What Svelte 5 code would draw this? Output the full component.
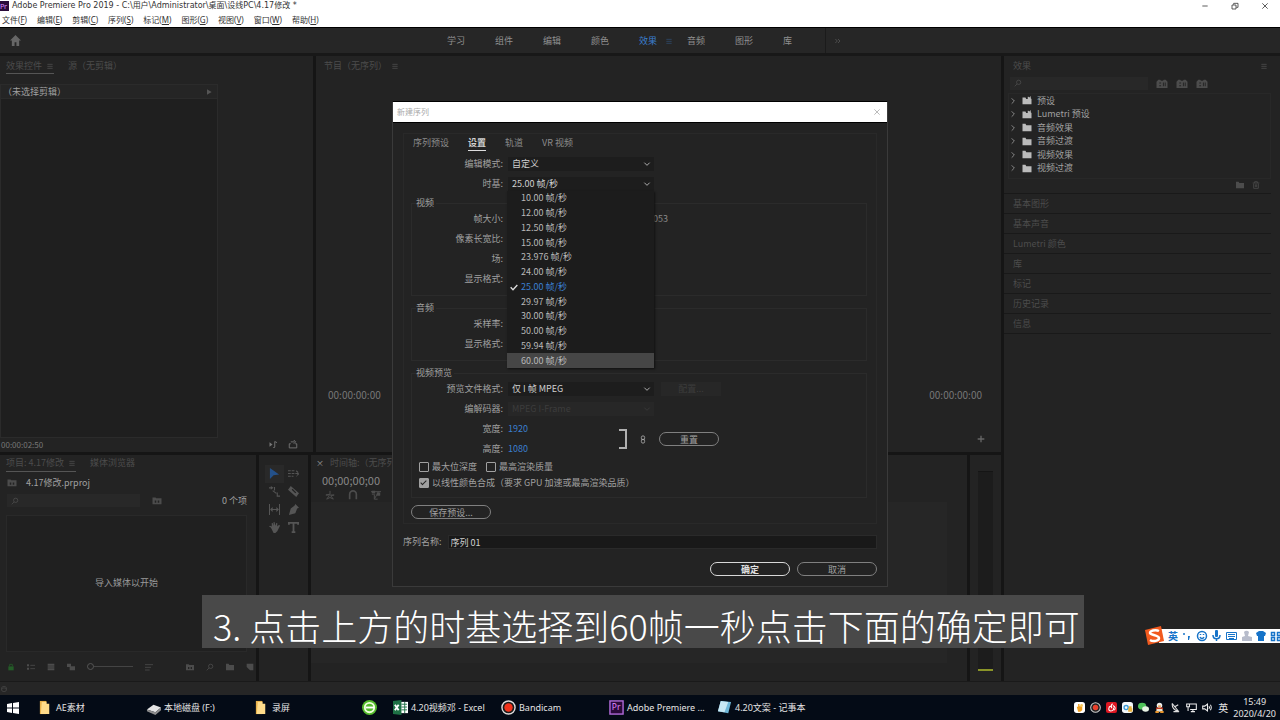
<script>
  // Application menus and workspaces
  const menus = ['文件(F)', '编辑(E)', '剪辑(C)', '序列(S)', '标记(M)', '图形(G)', '视图(V)', '窗口(W)', '帮助(H)'];
  const workspaces = ['学习', '组件', '编辑', '颜色', '效果', '音频', '图形', '库'];
  let workspace = $state('效果');

  // Effects panel
  const effects = [
    { name: '预设', preset: true },
    { name: 'Lumetri 预设', preset: true },
    { name: '音频效果' },
    { name: '音频过渡' },
    { name: '视频效果' },
    { name: '视频过渡' }
  ];
  const closedPanels = ['基本图形', '基本声音', 'Lumetri 颜色', '库', '标记', '历史记录', '信息'];

  // New sequence dialog
  const tabs = ['序列预设', '设置', '轨道', 'VR 视频'];
  const rates = ['10.00', '12.00', '12.50', '15.00', '23.976', '24.00', '25.00', '29.97', '30.00', '50.00', '59.94', '60.00'];
  let tab = $state('设置');
  let rate = $state('25.00');
  let hovered = $state('60.00');
  let sequenceName = $state('序列 01');

  const tools = ['select', 'track', 'ripple', 'razor', 'slip', 'pen', 'hand', 'type'];
  const toolNames = ['选择', '向前选择轨道', '波纹编辑', '剃刀', '外滑', '钢笔', '手形', '文字'];

  const tasks = [
    { icon: 'folder', text: 'AE素材' },
    { icon: 'disk', text: '本地磁盘 (F:)' },
    { icon: 'folder', text: '录屏' },
    { icon: 'browser', text: '' },
    { icon: 'excel', text: '4.20视频邓 - Excel' },
    { icon: 'bandicam', text: 'Bandicam' },
    { icon: 'pr', text: 'Adobe Premiere ...' },
    { icon: 'note', text: '4.20文案 - 记事本' }
  ];
  const tray = ['hand', 'record', 'music', 'cloud', 'wechat', 'qq', 'dish', 'net', 'sound'];
</script>

{#snippet glyph(name)}
  <svg class="glyph" viewBox="0 0 12 12" aria-hidden="true">
    {#if name === 'home'}
      <path class="fill" d="M6 0 0 6h2v6h3V8h2v4h3V6h2z" />
    {:else if name === 'menu'}
      <path d="M2 3.5h8M2 6.5h8M2 9.5h8" />
    {:else if name === 'more'}
      <path d="M2 3l3 3-3 3M6 3l3 3-3 3" />
    {:else if name === 'search'}
      <circle cx="7" cy="5" r="3.2" /><path d="M4.6 7.4 1 11" />
    {:else if name === 'right'}
      <path d="M4 2l4 4-4 4" />
    {:else if name === 'down'}
      <path d="M2 4l4 4 4-4" />
    {:else if name === 'play'}
      <path class="fill" d="M3 2l7 4-7 4z" />
    {:else if name === 'close'}
      <path d="M2 2l8 8M10 2l-8 8" />
    {:else if name === 'min'}
      <path d="M2 6h8" />
    {:else if name === 'restore'}
      <path d="M1.5 4.5h6v6h-6zM4 4V2h6.500v6H8" />
    {:else if name === 'folder'}
      <path class="fill" d="M0 1h4l1 2h7v8H0z" />
    {:else if name === 'preset'}
      <path class="fill" d="M0 2h4l1 2h2V1h1l1 1 2-2v3l1 1v7H0z" />
    {:else if name === 'bin'}
      <path class="fill" fill-rule="evenodd" d="M0 2h4l1 1h7v8H0zM3 6v3h2V6zM7 6v3h2V6z" />
    {:else if name === 'badge'}
      <path class="fill" fill-rule="evenodd" d="M0 4l2-2h2l1 1h2l1-1h2l2 2v7H0zM3 5v1h2V5zM3 8v1h2V8zM7 5v4h1V5zM9 5v4h1V5z" />
    {:else if name === 'trash'}
      <path d="M1 3h10M4 3V1h4v2M2.500 4v7h7V4M5 5v4M7 5v4" />
    {:else if name === 'note'}
      <path class="fill" d="M0 3l4 3-4 3z" /><path d="M7 9.500V2l3 1.500M5 10h2" />
    {:else if name === 'export'}
      <path d="M3 5H1v5.500h10V5H9M3 2.500h5M7 0l2.500 2.500L7 5" />
    {:else if name === 'plus'}
      <path class="thick" d="M6 1v10M1 6h10" />
    {:else if name === 'pencil'}
      <path class="fill" d="M2 5h8v6H2z" /><path d="M4 5V2h4v3" />
    {:else if name === 'list'}
      <path class="fill" d="M0 2h3v3H0zM0 7h3v3H0z" /><path d="M5 3.500h7M5 8.500h7" />
    {:else if name === 'icons'}
      <path class="fill" d="M1 1h10v3H1zM1 5h10v2H1zM1 8h10v3H1z" />
    {:else if name === 'free'}
      <path class="fill" d="M0 1h6v5H0zM4 5h8v6H4z" />
    {:else if name === 'sort'}
      <path d="M0 2.500h12M0 6.500h9M0 10.500h7" />
    {:else if name === 'new'}
      <path class="fill" d="M1 1h10v10H6L1 6z" />
    {:else if name === 'link'}
      <rect x="3.500" y="0.500" width="5" height="6" rx="2.500" /><rect x="3.500" y="5.500" width="5" height="6" rx="2.500" />
    {:else if name === 'check'}
      <path class="thick" d="M1 6.500 4.500 10 11 3" />
    {:else if name === 'select'}
      <path class="fill" d="M1 0l10 7-6 1-4 4z" />
    {:else if name === 'track'}
      <path d="M0 3h7M0 6h12M9 3l3 3-3 3M0 9h6" stroke-dasharray="3 1" />
    {:else if name === 'ripple'}
      <path d="M0 2h3M6 1v4M4 5l4 3M9 7v4h3" /><path class="fill" d="M2 0l3 2-3 2z" />
    {:else if name === 'razor'}
      <path class="fill" fill-rule="evenodd" d="M3 0l9 8-3 4-9-8zM4 4l4 4 1-1-4-4z" />
    {:else if name === 'slip'}
      <path d="M.5 0v12M11.500 0v12M2 6h8M4 4 2 6l2 2M8 4l2 2-2 2" />
    {:else if name === 'pen'}
      <path class="fill" d="M8 0l4 4-2 1-2 5-7 2 2-7 4-3z" />
    {:else if name === 'hand'}
      <path class="fill" d="M2 6 0 5l1-1 2 1V1h1l1 3V0h1l1 4 1-3h1v4l2-2 1 1-3 6-2 2H5z" />
    {:else if name === 'type'}
      <path class="thick" d="M1 3V1h10v2M6 1v10M4 11h4" />
    {:else if name === 'nest'}
      <path d="M6 1v4L1 6h10L7 7l3 4-4-2-4 2 3-4" />
    {:else if name === 'magnet'}
      <path class="thick" d="M2 11V5a4 4 0 0 1 8 0v6" />
    {:else if name === 'linked'}
      <path d="M0 2h12M1 5h4M7 5h4M9 2 4 11M4 6v5h4" /><path class="fill" d="M1 1h4v3H1zM7 3h4v4H7z" />
    {:else if name === 'sync'}
      <circle cx="6" cy="6" r="4" /><path d="M3 6l3-2 3 2" />
    {/if}
  </svg>
{/snippet}

{#snippet appIcon(name)}
  <svg class="app-icon" viewBox="0 0 16 16" aria-hidden="true">
    {#if name === 'folder'}
      <path fill="#e9b34c" d="M2 1h7v14H2z" /><path fill="#ffdc8a" d="M4 2h5v2h3v11H3z" />
    {:else if name === 'disk'}
      <path fill="#e4e4e4" d="M1 10l7-5 8 3-6 5z" /><path fill="#8c8c8c" d="M1 10l9 3 6-5v3l-6 5-9-4z" />
    {:else if name === 'browser'}
      <circle cx="8" cy="8" r="8" fill="#55bb2c" /><circle cx="8" cy="8" r="5" fill="none" stroke="#efffdc" stroke-width="2" />
      <path stroke="#fff" stroke-width="2" d="M4 8h9" />
    {:else if name === 'excel'}
      <path fill="#fff" d="M8 2h8v12H8z" /><path fill="#1e7145" d="M0 1l9-1v16l-9-1z" />
      <path stroke="#1e7145" fill="none" d="M9 4.500h6M9 7.500h6M9 10.500h6M12.500 2v12" />
      <path stroke="#fff" stroke-width="2" d="M2 5l4 6M6 5l-4 6" />
    {:else if name === 'bandicam'}
      <circle cx="8" cy="8" r="7" fill="#1b1b1b" stroke="#ddd" stroke-width="1.500" /><circle cx="8" cy="8" r="4.500" fill="#f2331b" />
    {:else if name === 'pr'}
      <rect x="1" y="1" width="14" height="14" fill="#2a0a3a" stroke="#b06ad8" stroke-width="1.500" />
      <text x="3" y="11" font-size="9" fill="#e08cff">Pr</text>
    {:else if name === 'note'}
      <path fill="#6fb7d8" d="M4 1l11 1-3 12-11-2z" /><path fill="#c8e8f4" d="M4 1l8 1-4 11-7-1z" />
    {:else if name === 'hand'}
      <rect width="16" height="16" rx="4" fill="#fff" /><path fill="#f0a020" d="M4 7h2V3h2v3h4v6l-3 2H6z" /><circle cx="11" cy="5" r="2" fill="#f9c958" />
    {:else if name === 'record'}
      <circle cx="8" cy="8" r="7" fill="#222" stroke="#ccc" stroke-width="1.500" /><circle cx="8" cy="8" r="4" fill="#e8402c" />
    {:else if name === 'music'}
      <rect width="16" height="16" rx="3" fill="#dd1722" /><path fill="none" stroke="#fff" stroke-width="1.500" d="M10 3c-3 0-2 3-2 6M7 6c-4 1-4 7 0 7s5-3 3-5M10 5c4 2 4 5 2 7" />
    {:else if name === 'cloud'}
      <rect width="16" height="16" rx="4" fill="#f4f8fa" /><circle cx="6" cy="8" r="3" fill="none" stroke="#3b9bd8" stroke-width="2" /><path fill="#e8b13a" d="M10 6h4v3h1v5H9V9h1z" />
    {:else if name === 'wechat'}
      <ellipse cx="6" cy="6" rx="6" ry="5" fill="#4fc35a" /><ellipse cx="11" cy="10" rx="5" ry="4" fill="#e8f3e4" />
    {:else if name === 'qq'}
      <circle cx="8" cy="5" r="4" fill="#eee" /><path fill="#c43b20" d="M3 8h10v3H3z" /><path fill="#e9e2d0" d="M4 10h8l1 4H3z" /><path fill="#e8952c" d="M2 13h5v3H2zM9 13h5v3H9zM6 5h4v2H6z" />
    {:else if name === 'dish'}
      <path fill="none" stroke="#ddd" stroke-width="1.500" d="M3 2c0 6 3 10 9 11L3 2M5 14h8M7 7l5-3" />
    {:else if name === 'net'}
      <path fill="none" stroke="#eee" stroke-width="1.500" d="M4 3h11v8H6M10 11v3M7 14h6M1 3h4v4H1zM3 7v6" />
    {:else if name === 'sound'}
      <path fill="none" stroke="#eee" stroke-width="1.500" d="M1 6h3l4-3v10l-4-3H1zM10 6c1 1 1 3 0 4M12 4c2 2 2 6 0 8" />
    {/if}
  </svg>
{/snippet}

<div class="app">
  <!-- Window title and menus -->
  <header class="titlebar">
    <svg class="logo" viewBox="0 0 9 10" aria-hidden="true"><rect width="9" height="10" fill="#2a0a3a" /><text x="0" y="8" font-size="7" fill="#d98cff">Pr</text></svg>
    <h1>Adobe Premiere Pro 2019 - C:\用户\Administrator\桌面\设线PC\4.17修改 *</h1>
    <div class="window-buttons">
      <button aria-label="最小化">{@render glyph('min')}</button>
      <button aria-label="还原">{@render glyph('restore')}</button>
      <button aria-label="关闭">{@render glyph('close')}</button>
    </div>
  </header>
  <nav class="menubar">
    {#each menus as item}
      <button>{item.slice(0, 3)}<u>{item[3]}</u>)</button>
    {/each}
  </nav>

  <!-- Workspace switcher -->
  <nav class="workspaces">
    <button class="home" aria-label="主页">{@render glyph('home')}</button>
    <div class="workspace-list">
      {#each workspaces as item}
        <button class:active={workspace === item} onclick={() => (workspace = item)}>
          {item}{#if workspace === item}{@render glyph('menu')}{/if}
        </button>
      {/each}
    </div>
    <button class="overflow" aria-label="更多">{@render glyph('more')}</button>
  </nav>

  <main>
    <div class="panels">
      <div class="top-row">
        <section class="panel controls">
          <div class="panel-tabs">
            <span class="current">效果控件 {@render glyph('menu')}</span>
            <span>源（无剪辑）</span>
          </div>
          <div class="clip">
            <div class="clip-head"><span>（未选择剪辑）</span>{@render glyph('play')}</div>
          </div>
          <footer><span>00:00:02:50</span><i></i>{@render glyph('note')}{@render glyph('export')}</footer>
        </section>

        <section class="panel program">
          <div class="panel-tabs"><span>节目（无序列） {@render glyph('menu')}</span></div>
          <div class="monitor"></div>
          <div class="timecodes"><span>00:00:00:00</span><span>00:00:00:00</span></div>
          <div class="transport"><button aria-label="按钮编辑器">{@render glyph('plus')}</button></div>
        </section>
      </div>

      <div class="bottom-row">
        <section class="panel project">
          <div class="panel-tabs">
            <span class="current">项目: 4.17修改 {@render glyph('menu')}</span>
            <span>媒体浏览器</span>
          </div>
          <div class="path">{@render glyph('bin')}<span>4.17修改.prproj</span></div>
          <div class="find">
            <label class="search">{@render glyph('search')}<input aria-label="搜索项目" /></label>
            {@render glyph('bin')}
            <span>0 个项</span>
          </div>
          <div class="drop">导入媒体以开始</div>
          <div class="project-tools">
            <span class="green">{@render glyph('pencil')}</span>
            {@render glyph('list')}{@render glyph('icons')}{@render glyph('free')}
            <input type="range" min="0" max="100" value="0" aria-label="缩放" />
            {@render glyph('sort')}
            <i></i>
            {@render glyph('bin')}{@render glyph('search')}{@render glyph('folder')}{@render glyph('new')}
          </div>
        </section>

        <section class="panel tools">
          {#each tools as tool, i}
            <button class:active={tool === 'select'} aria-label={toolNames[i]}>{@render glyph(tool)}</button>
          {/each}
        </section>

        <section class="panel timeline">
          <div class="panel-tabs"><span class="x">×</span><span>时间轴:（无序列）</span></div>
          <div class="position">00;00;00;00</div>
          <div class="toggles">{@render glyph('nest')}{@render glyph('magnet')}{@render glyph('linked')}</div>
          <div class="tracks">在此处放下媒体以创建序列。</div>
        </section>

        <section class="panel meters"><div class="meter"></div></section>
      </div>
    </div>

    <!-- Effects browser -->
    <aside class="panel effects">
      <div class="panel-tabs"><span>效果</span>{@render glyph('menu')}</div>
      <div class="effects-find">
        <label class="search">{@render glyph('search')}<input aria-label="搜索效果" /></label>
        {@render glyph('badge')}{@render glyph('badge')}{@render glyph('badge')}
      </div>
      <ul class="tree">
        {#each effects as item}
          <li>{@render glyph('right')}{@render glyph(item.preset ? 'preset' : 'folder')}<span>{item.name}</span></li>
        {/each}
      </ul>
      <div class="effects-tools">{@render glyph('folder')}{@render glyph('trash')}</div>
      {#each closedPanels as name}
        <button class="closed">{name}</button>
      {/each}
    </aside>
  </main>

  <div class="status">{@render glyph('sync')}</div>

  <!-- Windows taskbar -->
  <footer class="taskbar">
    <button class="start" aria-label="开始">
      <svg viewBox="0 0 12 12"><path fill="#fff" d="M0 2l5-1v4.500H0zM6 1l6-1v5.500H6zM0 6.500h5V11l-5-1zM6 6.500h6V12l-6-1z" /></svg>
    </button>
    {#each tasks as task}
      <button class="task" class:small={!task.text} aria-label={task.text || '浏览器'}>{@render appIcon(task.icon)}{task.text}</button>
    {/each}
    <div class="tray">
      {#each tray as item}{@render appIcon(item)}{/each}
      <span class="lang">英</span>
      <time><span>15:49</span><span>2020/4/20</span></time>
    </div>
  </footer>

  <!-- New sequence dialog -->
  <div class="dialog" role="dialog" aria-labelledby="dialog-title">
    <div class="dialog-title">
      <h2 id="dialog-title">新建序列</h2>
      <button aria-label="关闭对话框">{@render glyph('close')}</button>
    </div>
    <form class="dialog-body" onsubmit={(e) => e.preventDefault()}>
      <div class="frame">
        <div class="tabs" role="tablist">
          {#each tabs as item}
            <button type="button" role="tab" aria-selected={tab === item} class:active={tab === item} onclick={() => (tab = item)}>{item}</button>
          {/each}
        </div>
        <div class="row">
          <label for="mode">编辑模式:</label>
          <div class="select"><select id="mode"><option>自定义</option></select>{@render glyph('down')}</div>
        </div>
        <div class="row">
          <label for="base">时基:</label>
          <div class="select">
            <select id="base" bind:value={rate}>
              {#each rates as r}<option value={r}>{r} 帧/秒</option>{/each}
            </select>
            {@render glyph('down')}
            <ul class="options">
              {#each rates as r}
                <li class:chosen={r === rate} class:hovered={r === hovered}>
                  <button type="button" onclick={() => (rate = r)} onmouseenter={() => (hovered = r)}>
                    <span class="tick">{#if r === rate}{@render glyph('check')}{/if}</span>{r} 帧/秒
                  </button>
                </li>
              {/each}
            </ul>
          </div>
        </div>

        <fieldset>
          <legend>视频</legend>
          <div class="row"><span>帧大小:</span><span class="ratio">053</span></div>
          <div class="row"><span>像素长宽比:</span></div>
          <div class="row"><span>场:</span></div>
          <div class="row"><span>显示格式:</span></div>
        </fieldset>
        <fieldset>
          <legend>音频</legend>
          <div class="row"><span>采样率:</span></div>
          <div class="row"><span>显示格式:</span></div>
        </fieldset>
        <fieldset>
          <legend>视频预览</legend>
          <div class="row">
            <label for="format">预览文件格式:</label>
            <div class="select"><select id="format"><option>仅 I 帧 MPEG</option></select>{@render glyph('down')}</div>
            <button type="button" class="flat" disabled>配置...</button>
          </div>
          <div class="row">
            <label for="codec">编解码器:</label>
            <div class="select disabled"><select id="codec" disabled><option>MPEG I-Frame</option></select>{@render glyph('down')}</div>
          </div>
          <div class="size">
            <div>
              <div class="row"><label for="w">宽度:</label><input id="w" class="hot" value="1920" /></div>
              <div class="row"><label for="h">高度:</label><input id="h" class="hot" value="1080" /></div>
            </div>
            <span class="bracket"></span>
            {@render glyph('link')}
            <button type="button" class="pill reset">重置</button>
          </div>
          <div class="checks">
            <label><input type="checkbox" />最大位深度</label>
            <label><input type="checkbox" />最高渲染质量</label>
          </div>
          <div class="checks">
            <label><input type="checkbox" checked />以线性颜色合成（要求 GPU 加速或最高渲染品质）</label>
          </div>
        </fieldset>
        <button type="button" class="pill save">保存预设...</button>
      </div>
      <div class="name">
        <label for="name">序列名称:</label>
        <input id="name" bind:value={sequenceName} />
      </div>
      <div class="actions">
        <button type="submit" class="pill ok">确定</button>
        <button type="button" class="pill">取消</button>
      </div>
    </form>
  </div>

  <!-- Input method bar -->
  <div class="ime">
    <svg viewBox="0 0 136 20" aria-hidden="true">
      <path fill="#fff" d="M14 3h122v14H14z" />
      <path fill="#f25a1e" d="M0 4l16-4 3 15-16 4z" />
      <path fill="none" stroke="#fff" stroke-width="2.500" d="M14 5c-4-2-9 0-9 2s9 2 9 5-6 4-9 2" />
      <g fill="none" stroke="#1673c8" stroke-width="1.500">
        <circle cx="57" cy="10" r="4.500" /><path d="M55 11c1 2 3 2 4 0M55.500 8v1M58.500 8v1" />
        <path d="M68 9c0 5 7 5 7 0M71.500 13v2" />
        <path stroke-width="1" d="M81.500 6.500h10v7h-10zM83 8.500h7M83 10.500h7M84 12.500h5" />
        <path d="M126.500 6.500h3v3h-3zM126.500 11.500h3v3h-3zM132.500 11.500h3v3h-3zM132.500 6.500h3v3h-3z" />
      </g>
      <g fill="#1673c8">
        <rect x="70" y="4" width="3" height="7" rx="1" /><circle cx="39" cy="8" r="1" /><path d="M43 10h2l-1 4h-1z" />
        <path d="M111 7l3-2h4l3 2-1 3h-1v5h-6v-5h-1z" />
      </g>
      <path fill="#b7bccb" d="M99 6a3 3 0 0 1 5 0l-1 4 4 1v4H97v-4l3-1z" />
    </svg>
    <span>英</span>
  </div>

  <p class="caption">3. 点击上方的时基选择到60帧一秒点击下面的确定即可</p>
</div>

<style>
  :global(body) {
    margin: 0;
    background: #151515;
  }

  .app {
    position: relative;
    display: flex;
    flex-direction: column;
    height: 100vh;
    min-height: 720px;
    overflow: hidden;
    color: #a0a0a0;
    font: 9px/12px 'Noto Sans CJK SC', sans-serif;
  }

  /* Resets */
  button,
  input,
  select {
    box-sizing: border-box;
    margin: 0;
    padding: 0;
    border: 0;
    background: none;
    color: inherit;
    font: inherit;
    border-radius: 0;
  }

  ul {
    margin: 0;
    padding: 0;
    list-style: none;
  }

  h1,
  h2,
  p {
    margin: 0;
    font: inherit;
  }

  .glyph {
    width: 8px;
    height: 8px;
    flex: none;
    fill: none;
    stroke: currentColor;
    stroke-width: 1.2;
  }

  .glyph .fill {
    fill: currentColor;
    stroke: none;
  }

  .glyph .thick {
    stroke-width: 2;
  }

  /* Title bar and menus */
  .titlebar,
  .menubar {
    display: flex;
    align-items: center;
    background: #fff;
    color: #333;
    font-size: 8px;
  }

  .titlebar {
    height: 12px;
    gap: 3px;
    font-family: 'DejaVu Sans', 'Noto Sans CJK SC', sans-serif;
  }

  .logo {
    width: 9px;
    height: 10px;
  }

  .titlebar h1 {
    flex: 1;
  }

  .window-buttons {
    display: flex;
    gap: 22px;
    padding-right: 11px;
  }

  .window-buttons button {
    display: flex;
  }

  .menubar {
    height: 15px;
    gap: 10px;
    padding-left: 2px;
    border-bottom: 1px solid #000;
    font-family: 'Noto Sans', 'Noto Sans CJK SC', sans-serif;
  }

  /* Workspaces */
  .workspaces {
    display: grid;
    grid-template-columns: 1fr 378px 1fr;
    align-items: center;
    height: 25px;
    padding-right: 8px;
    background: #262626;
    border-bottom: 3px solid #181818;
  }

  .workspaces button {
    display: flex;
    align-items: center;
  }

  .home {
    padding-left: 10px;
    color: #666;
  }

  .home .glyph {
    width: 11px;
    height: 11px;
  }

  .workspace-list {
    display: flex;
  }

  .workspace-list button {
    width: 48px;
    gap: 8px;
    flex: none;
    color: #909090;
  }

  .workspace-list .active {
    color: #3b7fd0;
  }

  .workspace-list .glyph {
    opacity: 0.4;
  }

  .overflow {
    height: 25px;
    padding-left: 8px;
    border-left: 1px solid #1b1b1b;
    color: #555;
  }

  /* Panels */
  main {
    display: flex;
    gap: 3px;
    flex: 1;
    min-height: 0;
  }

  .panels {
    display: grid;
    grid-template-rows: 7fr 4fr;
    gap: 3px;
    flex: 1;
    min-width: 0;
  }

  .top-row,
  .bottom-row {
    display: flex;
    gap: 3px;
    min-height: 0;
  }

  .panel {
    display: flex;
    flex-direction: column;
    background: #232323;
    color: #4c4c4c;
  }

  .panel-tabs {
    display: flex;
    flex: none;
    gap: 14px;
    padding: 2px 6px 0;
  }

  .bottom-row .panel-tabs {
    padding-top: 1px;
  }

  .panel-tabs span {
    display: flex;
    align-items: center;
    gap: 4px;
    height: 15px;
    white-space: nowrap;
  }

  .panel-tabs .current {
    border-bottom: 1px solid #555;
  }

  .controls {
    width: 313px;
  }

  .clip {
    flex: 1;
    width: 216px;
    margin-top: 10px;
    border: 1px solid #2b2b2b;
    background: #1f1f1f;
  }

  .clip-head {
    display: flex;
    align-items: center;
    justify-content: space-between;
    height: 13px;
    padding: 0 4px 0 2px;
    background: #252525;
    border-bottom: 1px solid #2b2b2b;
    color: #a0a0a0;
  }

  .clip-head .glyph {
    width: 8px;
    color: #555;
  }

  .controls footer {
    display: flex;
    align-items: center;
    gap: 9px;
    height: 14px;
    padding: 0 15px 0 1px;
    color: #777;
    font-size: 8px;
  }

  .controls i,
  .project-tools i {
    flex: 1;
  }

  .controls footer .glyph {
    width: 10px;
    height: 9px;
  }

  .program {
    flex: 1;
  }

  .program .panel-tabs {
    padding-left: 8px;
  }

  .monitor {
    flex: 1;
  }

  .timecodes {
    display: flex;
    justify-content: space-between;
    padding: 0 19px 0 12px;
    color: #777;
    font-size: 10px;
  }

  .transport {
    display: flex;
    justify-content: flex-end;
    padding: 34px 16px 9px 0;
    color: #666;
  }

  .transport button {
    display: flex;
  }

  /* Project */
  .project {
    width: 256px;
  }

  .path,
  .find,
  .project-tools {
    display: flex;
    align-items: center;
    flex: none;
  }

  .path {
    gap: 9px;
    height: 20px;
    padding-left: 7px;
    margin-top: 1px;
  }

  .path span,
  .find span {
    color: #a0a0a0;
  }

  .find {
    gap: 12px;
    height: 16px;
    padding: 0 9px 0 7px;
  }

  .find span {
    margin-left: auto;
  }

  .path .glyph,
  .find > .glyph {
    width: 10px;
    height: 9px;
  }

  .search {
    display: flex;
    align-items: center;
    width: 133px;
    height: 13px;
    padding-left: 4px;
    box-sizing: border-box;
    background: #282828;
  }

  .search input {
    flex: 1;
    min-width: 0;
  }

  .drop {
    display: flex;
    flex: 1;
    align-items: center;
    justify-content: center;
    margin: 6px 9px 0 6px;
    border: 1px solid #292929;
    background: #202020;
    color: #999;
  }

  .project-tools {
    gap: 12px;
    height: 29px;
    padding: 0 2px 0 7px;
  }

  .project-tools span {
    display: flex;
  }

  .green {
    color: #245c28;
  }

  .project-tools input {
    appearance: none;
    width: 46px;
    height: 8px;
    background: linear-gradient(#444, #444) center / 100% 1px no-repeat;
  }

  .project-tools input::-webkit-slider-thumb {
    appearance: none;
    box-sizing: border-box;
    width: 7px;
    height: 7px;
    border: 1px solid #555;
    border-radius: 50%;
    background: #232323;
  }

  /* Tools */
  .tools {
    display: grid;
    grid-template-columns: 19px 19px;
    grid-auto-rows: 18px;
    justify-content: center;
    width: 49px;
    padding-top: 10px;
    box-sizing: border-box;
    color: #555;
  }

  .tools button {
    display: grid;
    place-items: center;
  }

  .tools .active {
    background: #292929;
    color: #24518a;
  }

  .tools .glyph {
    width: 11px;
    height: 11px;
  }

  /* Timeline */
  .timeline {
    flex: 1;
    min-width: 0;
  }

  .timeline .panel-tabs {
    gap: 6px;
    padding-left: 5px;
  }

  .timeline .x {
    color: #999;
    font-size: 8px;
  }

  .position {
    padding: 1px 11px 0;
    color: #888;
    font-size: 11px;
    line-height: 16px;
  }

  .toggles {
    display: flex;
    align-items: center;
    gap: 13px;
    height: 14px;
    padding-left: 14px;
  }

  .toggles .glyph {
    width: 10px;
    height: 10px;
  }

  .tracks {
    display: grid;
    place-items: center;
    flex: 1;
    margin: 0 20px 18px 0;
    background: #262626;
    color: #888;
  }

  .meters {
    width: 31px;
    padding: 16px 8px 10px;
    box-sizing: border-box;
  }

  .meter {
    flex: 1;
    background: #1c1c1c;
    border-top: 1px solid #151515;
    border-bottom: 2px solid #8a9428;
  }

  /* Effects */
  .effects {
    width: 276px;
  }

  .effects > .panel-tabs {
    justify-content: space-between;
    align-items: center;
    padding: 2px 12px 0 9px;
  }

  .effects-find {
    display: flex;
    align-items: center;
    gap: 8px;
    height: 20px;
    padding-left: 6px;
  }

  .effects-find .search {
    width: 138px;
  }

  .effects-find > .glyph {
    width: 12px;
    height: 11px;
  }

  .tree {
    display: grid;
    grid-auto-rows: 1fr;
    height: 81px;
    margin: 0 9px 0 4px;
    padding: 0 0 3px;
    border: 1px solid #282828;
    color: #a0a0a0;
  }

  .tree li {
    display: flex;
    align-items: center;
    gap: 5px;
  }

  .tree .glyph + .glyph {
    width: 10px;
    height: 9px;
    color: #bbb;
  }

  .effects-tools {
    display: flex;
    justify-content: flex-end;
    gap: 8px;
    padding: 2px 20px 4px 0;
  }

  .closed {
    height: 20px;
    margin-right: 9px;
    padding-left: 9px;
    border-top: 1px solid #191919;
    text-align: left;
  }

  .closed:last-child {
    height: 21px;
    border-bottom: 1px solid #191919;
  }

  .status {
    display: flex;
    align-items: center;
    height: 13px;
    border-top: 1px solid #1a1a1a;
    background: #262626;
    color: #444;
  }

  /* Taskbar */
  .taskbar {
    display: flex;
    height: 25px;
    background: #040b16;
    color: #e4e4e4;
    font-family: 'Noto Sans', 'Noto Sans CJK SC', sans-serif;
  }

  .start {
    display: flex;
    align-items: center;
    width: 38px;
    padding-left: 7px;
  }

  .start svg {
    width: 12px;
    height: 12px;
  }

  .task {
    display: flex;
    align-items: center;
    gap: 3px;
    width: 108px;
    white-space: nowrap;
  }

  .task.small {
    width: 31px;
  }

  .app-icon {
    width: 15px;
    height: 15px;
    flex: none;
  }

  .tray {
    display: flex;
    align-items: center;
    gap: 5px;
    margin-left: auto;
    padding-right: 4px;
  }

  .tray .app-icon {
    width: 11px;
    height: 11px;
  }

  .lang {
    font-size: 10px;
  }

  .tray time {
    display: flex;
    flex-direction: column;
    align-items: center;
  }

  /* Dialog */
  .dialog {
    position: absolute;
    top: 101px;
    left: 50%;
    box-sizing: border-box;
    width: 496px;
    margin-left: -248px;
    border: 1px solid #3a3a3a;
    border-top-color: #000;
    background: #232323;
  }

  .dialog-title {
    display: flex;
    align-items: center;
    justify-content: space-between;
    height: 20px;
    padding: 0 6px 0 4px;
    border-bottom: 1px solid #000;
    background: #fff;
    color: #aaa;
    font-size: 8px;
  }

  .dialog-title button {
    display: flex;
  }

  .dialog-body {
    padding: 10px;
  }

  .frame {
    padding: 0 9px 4px 7px;
    border: 1px solid #292929;
  }

  .tabs {
    display: flex;
    gap: 19px;
    height: 18px;
    padding: 0 2px 2px;
    align-items: center;
    color: #8c8c8c;
  }

  .tabs button {
    height: 15px;
    border-bottom: 1px solid transparent;
  }

  .tabs .active {
    border-color: #ddd;
    color: #d0d0d0;
    font-weight: 700;
  }

  .row {
    display: grid;
    grid-template-columns: 92px 146px 62px;
    gap: 5px;
    align-items: center;
    height: 20px;
  }

  .row > :first-child {
    text-align: right;
  }

  .select {
    position: relative;
    height: 14px;
    background: #1d1d1d;
    color: #d0d0d0;
  }

  .select select {
    display: block;
    appearance: none;
    width: 100%;
    height: 14px;
    padding-left: 4px;
    opacity: 1;
  }

  .select > .glyph {
    position: absolute;
    top: 3px;
    right: 3px;
    pointer-events: none;
  }

  .select.disabled {
    background: #272727;
    color: #3c3c3c;
  }

  .options {
    position: absolute;
    z-index: 1;
    top: 14px;
    left: -1px;
    display: grid;
    grid-auto-rows: 1fr;
    width: 147px;
    height: 177px;
    background: #1c1c1c;
    box-shadow: 1px 1px 2px #111;
    color: #b8b8b8;
  }

  .options li {
    display: flex;
  }

  .options button {
    display: flex;
    align-items: center;
    width: 100%;
    padding-left: 3px;
  }

  .tick {
    display: flex;
    width: 11px;
    color: #ddd;
  }

  .options .chosen {
    color: #3b7fd0;
  }

  .options .hovered {
    background: #464646;
  }

  fieldset {
    min-width: 0;
    margin: 3px 0 6px;
    padding: 0 0 6px;
    border: 1px solid #2b2b2b;
  }

  fieldset + fieldset {
    margin-top: 0;
  }

  legend {
    margin-left: 4px;
    padding: 0 2px 0 0;
  }

  fieldset .row {
    grid-template-columns: 91px 146px 62px;
  }

  .ratio {
    text-align: right;
    margin-right: -14px;
    color: #888;
  }

  .flat {
    justify-self: end;
    width: 60px;
    height: 14px;
    background: #272727;
    color: #3c3c3c;
  }

  .size {
    display: grid;
    grid-template-columns: 195px 8px 8px 60px;
    gap: 0 12px;
    align-items: center;
  }

  .size > div > .row {
    grid-template-columns: 91px 40px;
  }

  .bracket {
    height: 16px;
    border: 2px solid #b0b0b0;
    border-left: 0;
  }

  .size .glyph {
    height: 11px;
    color: #b0b0b0;
  }

  .hot {
    color: #3b7fd0;
  }

  .checks {
    display: flex;
    gap: 9px;
    height: 16px;
    padding-left: 7px;
  }

  .checks label {
    display: flex;
    align-items: center;
    gap: 3px;
  }

  .checks input {
    appearance: none;
    width: 10px;
    height: 10px;
    border: 1px solid #a0a0a0;
    border-radius: 1px;
  }

  .checks input:checked {
    background: #a0a0a0;
  }

  .checks input:checked::after {
    content: '';
    display: block;
    width: 2px;
    height: 5px;
    margin-left: 2px;
    border: solid #232323;
    border-width: 0 1px 1px 0;
    transform: rotate(45deg);
  }

  .pill {
    width: 80px;
    height: 14px;
    border: 1px solid #808080;
    border-radius: 7px;
    line-height: 11px;
  }

  .pill.reset {
    width: 60px;
  }

  .save {
    display: block;
    margin-top: 7px;
  }

  .name {
    display: flex;
    align-items: center;
    gap: 6px;
    height: 20px;
    margin-top: 8px;
  }

  .name input {
    flex: 1;
    height: 14px;
    padding-left: 2px;
    border: 1px solid #2a2a2a;
    background: #191919;
    color: #d0d0d0;
  }

  .actions {
    display: flex;
    justify-content: flex-end;
    gap: 7px;
    margin-top: 10px;
  }

  .pill.ok {
    border-color: #d8d8d8;
    color: #e0e0e0;
    font-weight: 700;
  }

  /* Floating input method bar */
  .ime {
    position: absolute;
    right: 0;
    bottom: 74px;
    width: 135px;
    height: 20px;
    color: #1673c8;
    font-weight: 700;
  }

  .ime svg {
    width: 136px;
    height: 20px;
  }

  .ime span {
    position: absolute;
    top: 4px;
    left: 23px;
    font-size: 10px;
  }

  /* Subtitle */
  .caption {
    position: absolute;
    bottom: 72px;
    left: 50%;
    width: 882px;
    margin-left: -438px;
    padding-left: 11px;
    box-sizing: border-box;
    background: #494949;
    color: #fff;
    font-size: 36px;
    font-weight: 300;
    line-height: 53px;
    white-space: nowrap;
    height: 53px;
    padding-top: 4px;
  }
</style>
